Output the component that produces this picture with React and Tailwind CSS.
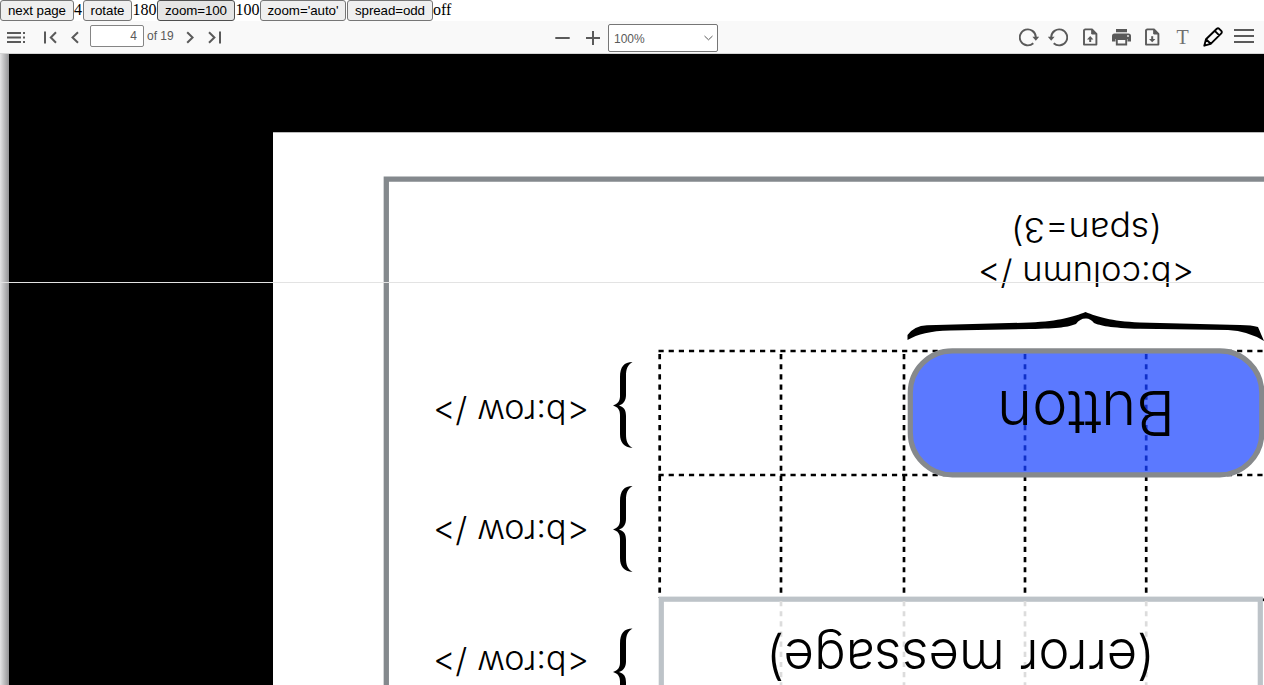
import React from "react";

const DARK = "#5a5a5a";

function NativeButton({ className, tone = "bg-[#efefef] border-[#767676]", label, length }) {
  return (
    <button className={`h-[21px] shrink-0 rounded-[3px] border ${tone} ${className}`}>
      <svg className="block h-full w-full">
        <text x="50%" y="14" textAnchor="middle" textLength={length} className="fill-black font-['Liberation_Sans',Arial,sans-serif] text-[13.33px]">{label}</text>
      </svg>
    </button>
  );
}

function Value({ className = "", children }) {
  return <span className={`shrink-0 leading-[19px] ${className}`}>{children}</span>;
}

function Icon({ className = "", w, h, children }) {
  return (
    <svg className={`shrink-0 ${className}`} width={w} height={h} viewBox={`0 0 ${w} ${h}`} fill="none" stroke={DARK} strokeWidth="2">
      {children}
    </svg>
  );
}

function TopBar() {
  return (
    <div className="flex h-[21px] items-start bg-white font-['Liberation_Serif','Times_New_Roman',serif] text-base text-black">
      <NativeButton className="w-[74px]" label="next page" length={58} />
      <Value className="w-[9px]">4</Value>
      <NativeButton className="w-[49px]" label="rotate" length={34} />
      <Value className="w-[25px] pl-[0.5px]">180</Value>
      <NativeButton className="w-[78px]" tone="bg-[#e5e5e5] border-[#4f4f4f]" label="zoom=100" length={62} />
      <Value className="w-[25px] pl-[0.5px]">100</Value>
      <NativeButton className="w-[86px]" label="zoom='auto'" length={71} />
      <NativeButton className="ml-px w-[86px]" label="spread=odd" length={70} />
      <Value>off</Value>
    </div>
  );
}

function Toolbar() {
  return (
    <div className="flex h-[33px] items-start border-b border-[#d5d5d5] bg-[#f9f9f9] font-['Liberation_Sans',Arial,sans-serif] text-[12px] text-[#5a5a5a]">
      <Icon className="ml-[7px] mt-[10px]" w={19} h={13}>
        <path d="M0 2H14M0 6.5H14M0 11H14" strokeWidth="2" />
        <path d="M16 2H18M16 6.5H18M16 11H18" strokeWidth="2" />
      </Icon>
      <Icon className="ml-[18px] mt-[10px]" w={13} h={13}>
        <path d="M1 0.5V12.5M12 1.2L6.8 6.5L12 11.8" strokeWidth="2" />
      </Icon>
      <Icon className="ml-[14px] mt-[10px]" w={8} h={13}>
        <path d="M7 1.2L1.5 6.5L7 11.8" strokeWidth="2" />
      </Icon>
      <div className="ml-[11px] mt-[4px] h-[22px] w-[54px] rounded-[2px] border border-[#858585] bg-white pr-[6px] text-right leading-[21px]">4</div>
      <span className="ml-[3px] mt-[4px] w-[28px] whitespace-nowrap leading-[23px]">of 19</span>
      <Icon className="ml-[11px] mt-[10px]" w={8} h={13}>
        <path d="M1.2 1.2L6.6 6.5L1.2 11.8" strokeWidth="2" />
      </Icon>
      <Icon className="ml-[14px] mt-[10px]" w={13} h={13}>
        <path d="M1 1.2L6.4 6.5L1 11.8M12 0.5V12.5" strokeWidth="2" />
      </Icon>
      <div className="ml-[334px] flex items-start">
        <Icon className="mt-[10px]" w={15} h={14}>
          <path d="M0.3 7H14.7" strokeWidth="2" />
        </Icon>
        <Icon className="ml-[16px] mt-[10px]" w={15} h={14}>
          <path d="M0 7H14M7 0V14" strokeWidth="2" />
        </Icon>
        <div className="ml-[7px] mt-[3px] flex h-[28px] w-[110px] items-center justify-between rounded-[2px] border border-[#767676] bg-white pl-[5px] pr-[4px]">
          <span className="pt-px">100%</span>
          <Icon w={9} h={6}>
            <path d="M0.5 1L4.5 4.8L8.5 1" strokeWidth="1" />
          </Icon>
        </div>
      </div>
      <div className="ml-[301px] flex items-start">
        <Icon className="mt-[7px]" w={20} h={19}>
          <path d="M14.3 15.2A8 8 0 1 1 16.8 9" strokeWidth="1.9" />
          <path d="M13.4 8.8H20.2L16.8 12.8Z" fill={DARK} stroke="none" />
        </Icon>
        <Icon className="ml-[9px] mt-[7px]" w={20} h={19}>
          <path d="M5.7 15.2A8 8 0 1 0 3.2 9" strokeWidth="1.9" />
          <path d="M6.6 8.8H-0.2L3.2 12.8Z" fill={DARK} stroke="none" />
        </Icon>
        <Icon className="ml-[15px] mt-[7px]" w={15} h={18}>
          <path d="M2 1.4H9L13.4 5.8V16.6H1V2.2Z" strokeWidth="1.9" strokeLinejoin="round" />
          <path d="M8.7 1V6H13.5" fill={DARK} strokeWidth="1" />
          <path d="M7.2 14V10" strokeWidth="2" />
          <path d="M4 11.5L7.2 8L10.4 11.5Z" fill={DARK} stroke="none" />
        </Icon>
        <Icon className="ml-[14px] mt-[8px]" w={19} h={17}>
          <path d="M4 0H15V3.2H4ZM2.5 4.5H16.5A2.5 2.5 0 0 1 19 7V12.5H15.5V10H3.5V12.5H0V7A2.5 2.5 0 0 1 2.5 4.5Z" fill={DARK} stroke="none" />
          <path d="M4.8 10H14.2V15.5H4.8Z" strokeWidth="1.9" />
          <circle cx="16" cy="7" r="0.9" fill="#f9f9f9" stroke="none" />
        </Icon>
        <Icon className="ml-[14px] mt-[7px]" w={15} h={18}>
          <path d="M2 1.4H9L13.4 5.8V16.6H1V2.2Z" strokeWidth="1.9" strokeLinejoin="round" />
          <path d="M8.7 1V6H13.5" fill={DARK} strokeWidth="1" />
          <path d="M7.2 8.2V12" strokeWidth="2" />
          <path d="M4 11L7.2 14.3L10.4 11Z" fill={DARK} stroke="none" />
        </Icon>
        <span className="ml-[16px] mt-[6px] w-[13px] text-center font-['Liberation_Serif',serif] text-[20px] leading-[20px] text-[#707070]">T</span>
        <Icon className="ml-[14px] mt-[6px]" w={20} h={20}>
          <path d="M1.3 18.7L3 12.3L13.8 1.8Q15 0.8 16.2 1.8L18.3 3.9Q19.3 5.1 18.3 6.3L7.7 16.8ZM11.8 3.8L16.3 8.3M3 12.3L7.7 16.8" stroke="#000" strokeWidth="1.9" strokeLinejoin="round" />
        </Icon>
        <Icon className="ml-[11px] mt-[7px]" w={20} h={16}>
          <path d="M0 2H20M0 8H20M0 14H20" strokeWidth="2" />
        </Icon>
      </div>
    </div>
  );
}

/* Text turned by 180 degrees about the centre of its baseline. */
function Turned({ cx, y, size, width, children }) {
  return (
    <text
      transform={`translate(${cx} ${y}) rotate(180)`}
      textAnchor="middle"
      fontSize={size}
      fontWeight={300}
      textLength={width}
      lengthAdjust="spacingAndGlyphs"
      className="fill-black font-[Inter,'Liberation_Sans',sans-serif]"
    >
      {children}
    </text>
  );
}

function RowBrace({ y }) {
  return (
    <path
      transform={`translate(613 ${y})`}
      d="M19.5 0C11 0 7 5 7 15V34C7 39 5 41.5 0 43.5C5 45 7 48 7 53V72C7 81 11 85 19.5 86C14.5 83 13 79 13 72V54C13 48 11 45 6 43.5C11 42 13 38 13 33V14C13 7 14.5 3 19.5 0Z"
      fill="#000"
    />
  );
}

const columns = [659.7, 781, 904, 1025, 1146.2];

function Viewer() {
  return (
    <svg className="block h-[631px] w-[1264px]" viewBox="0 54 1264 631">
      <defs>
        <linearGradient id="edge" x1="0" x2="1">
          <stop offset="0" stopColor="#e4e4e5" />
          <stop offset="1" stopColor="#929294" />
        </linearGradient>
      </defs>
      <rect y="54" width="1264" height="631" fill="#000" />
      <rect y="54" width="9" height="631" fill="url(#edge)" />
      <rect x="273" y="132" width="991" height="553" fill="#fff" />
      <path d="M273 132.5H1264" stroke="#bbb" />
      <path d="M386.3 700V179.2H1270" stroke="#84898d" strokeWidth="5.3" fill="none" />

      <Turned cx={1086.5} y={217.5} size={34} width={151}>(span=3)</Turned>
      <Turned cx={1086} y={261.5} size={34} width={216}>{"<b:column />"}</Turned>
      <Turned cx={511} y={400} size={33.5} width={156}>{"<b:row />"}</Turned>
      <Turned cx={511} y={520} size={33.5} width={156}>{"<b:row />"}</Turned>
      <Turned cx={511} y={651} size={33.5} width={156}>{"<b:row />"}</Turned>
      <RowBrace y={362} />
      <RowBrace y={486} />
      <RowBrace y={628.5} />
      <path d="M907.5 340V335Q914 326 927 325.3L1030 322.5C1060 321 1073 317 1085.5 312C1098 317 1110 321 1140 322.5L1240 325Q1252 325 1258 327L1264 341Q1248 331 1228 330L1140 328.8C1110 328 1100 325.5 1094 323Q1090 318 1085.5 318.5Q1080 318.5 1076 324C1068 327 1060 328.5 1030 329L950 330.5C930 331 918 334 907.5 340Z" fill="#000" />

      <g stroke="#000" strokeWidth="2.7" strokeDasharray="5.2 4.95">
        <path d="M658.5 351H1264M658.5 475H1264" />
        {columns.map((x) => (
          <path key={x} d={`M${x} 354V598`} />
        ))}
        <path d="M1261 599.8H1266" />
      </g>
      <rect x="910.3" y="350.8" width="351.5" height="124" rx="42" fill="#5b79ff" />
      <path d="M1025 354V473M1146.2 354V473" stroke="#1030c8" strokeWidth="2.7" strokeDasharray="5.2 4.95" />
      <rect x="910.3" y="350.8" width="351.5" height="124" rx="42" fill="none" stroke="#86898c" strokeWidth="5.2" />
      <Turned cx={1086} y={390.5} size={62} width={178}>Button</Turned>

      <rect x="661.3" y="599.2" width="599" height="110" fill="#fff" stroke="#bdc3c8" strokeWidth="5.2" />
      <path d="M781 601V685M904 601V685M1025 601V685M1146.2 601V685" stroke="#dcdcdc" strokeWidth="2.7" strokeDasharray="5.2 4.95" />
      <Turned cx={960.5} y={639.5} size={53} width={389}>(error message)</Turned>
      <path d="M0 282.5H1264" stroke="#e3e3e3" />
    </svg>
  );
}

export default function App() {
  return (
    <div className="flex h-[685px] w-[1264px] flex-col overflow-hidden bg-white">
      <TopBar />
      <Toolbar />
      <Viewer />
    </div>
  );
}
